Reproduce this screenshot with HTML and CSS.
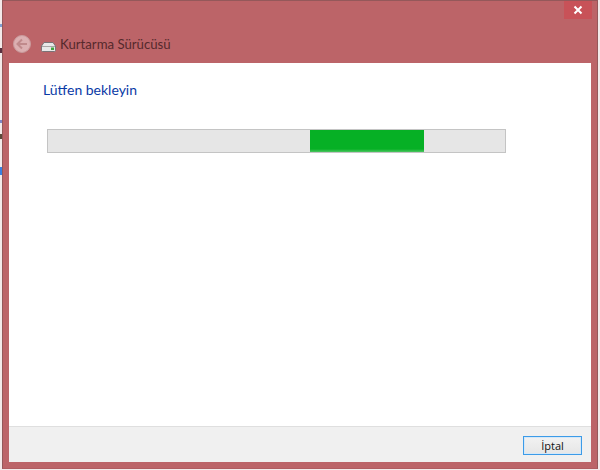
FILE: index.html
```html
<!DOCTYPE html>
<html lang="tr">
<head>
<meta charset="utf-8">
<title>Kurtarma Sürücüsü</title>
<link rel="stylesheet" href="styles.css">
</head>
<body>
<div class="desktop">
  <span class="fleck fleck-d"></span>
  <span class="fleck fleck-e"></span>
  <span class="fleck fleck-a"></span>
  <span class="fleck fleck-b"></span>
  <span class="fleck fleck-c"></span>
  <div class="window">
    <div class="captionbar">
      <button class="close" aria-label="Kapat">
        <svg width="10" height="10" viewBox="0 0 10 10"><path d="M1.5 1.5 8.5 8.5M8.5 1.5 1.5 8.5" stroke="#fff" stroke-width="2" fill="none"/></svg>
      </button>
      <div class="titlerow">
        <span class="back">
          <svg width="18" height="18" viewBox="0 0 18 18"><path d="M14 9H5M9 4.5 4.5 9 9 13.5" stroke="#c08a8c" stroke-width="2" fill="none"/></svg>
        </span>
        <svg class="drive" width="15" height="10" viewBox="0 0 15 10">
          <path d="M3 .5h9L14.5 4v4.5a1 1 0 0 1-1 1h-12a1 1 0 0 1-1-1V4z" fill="#e8e8e8" stroke="#7a7276"/>
          <path d="M1 4.5h13" stroke="#a9a5a6"/>
          <rect x="10" y="5.5" width="3" height="2.5" fill="#3fa63f"/>
        </svg>
        <span class="title">Kurtarma Sürücüsü</span>
      </div>
    </div>
    <div class="client">
      <main class="content">
        <h1 class="heading">Lütfen bekleyin</h1>
        <div class="progress"><div class="chunk"></div></div>
      </main>
      <footer class="footer">
        <button class="cancel">İptal</button>
      </footer>
    </div>
  </div>
</div>
</body>
</html>
```
FILE: styles.css
```css
* { box-sizing: border-box; }
html, body { margin: 0; padding: 0; }
body { width: 600px; height: 470px; overflow: hidden; background: #f3e9e9; font-family: Lato, "Open Sans", sans-serif; }
.desktop { position: relative; width: 600px; height: 470px; }
.fleck { position: absolute; left: 0; width: 2px; }
.fleck-d { top: 24px; height: 3px; background: #7f9ed0; }
.fleck-e { top: 48px; height: 5px; background: #5a3040; }
.fleck-a { top: 120px; height: 3px; background: #7f86c8; }
.fleck-b { top: 134px; height: 5px; background: #5a4a3a; }
.fleck-c { top: 167px; height: 8px; background: #3a7fe0; }
.window { position: absolute; left: 2px; top: 0; width: 596px; height: 469px; background: #bc6468; border: 1px solid #94585a; border-bottom-color: #b05c60; display: flex; flex-direction: column; padding: 0 6px 6px 6px; }
.captionbar { height: 62px; display: flex; flex-direction: column; flex: none; }
.close { align-self: flex-end; width: 28px; height: 18px; margin-right: -1px; border: 0; padding: 0; background: #c85258; display: flex; align-items: center; justify-content: center; }
.titlerow { display: flex; align-items: center; margin-top: 15px; height: 20px; }
.back { width: 18px; height: 18px; margin-left: 4px; border-radius: 50%; background: #dcb0b2; border: 1px solid #c99a9c; display: flex; align-items: center; justify-content: center; }
.back svg { flex: none; margin: -1px; }
.drive { margin-left: 10px; margin-top: 5px; flex: none; }
.title { margin-left: 4px; font-size: 13.2px; color: #55292c; white-space: nowrap; }
.client { flex: 1; background: #fff; display: flex; flex-direction: column; }
.content { flex: 1; padding: 17px 0 0 34px; }
.heading { margin: 0; font-size: 14px; line-height: 20px; font-weight: 400; color: #0a3aa6; }
.progress { margin: 29px 0 0 4px; width: 459px; height: 24px; background: #e6e6e6; border: 1px solid #c4c4c4; padding-left: 262px; }
.chunk { width: 114px; height: 22px; background: linear-gradient(to bottom, #06b025 0, #06b025 19px, #4ec662 22px); }
.footer { flex: none; height: 36px; background: #f0f0f0; border-top: 1px solid #dfdfdf; display: flex; justify-content: flex-end; padding: 9px 9px 0 0; }
.cancel { width: 59px; height: 19px; padding: 0; border: 1px solid #3c9be8; box-shadow: inset 0 0 0 1px #d5e8f8; background: linear-gradient(to bottom, #f2f2f2, #e6e6e6); font-family: "Open Sans", sans-serif; font-size: 11px; line-height: 15px; color: #111; }
```
